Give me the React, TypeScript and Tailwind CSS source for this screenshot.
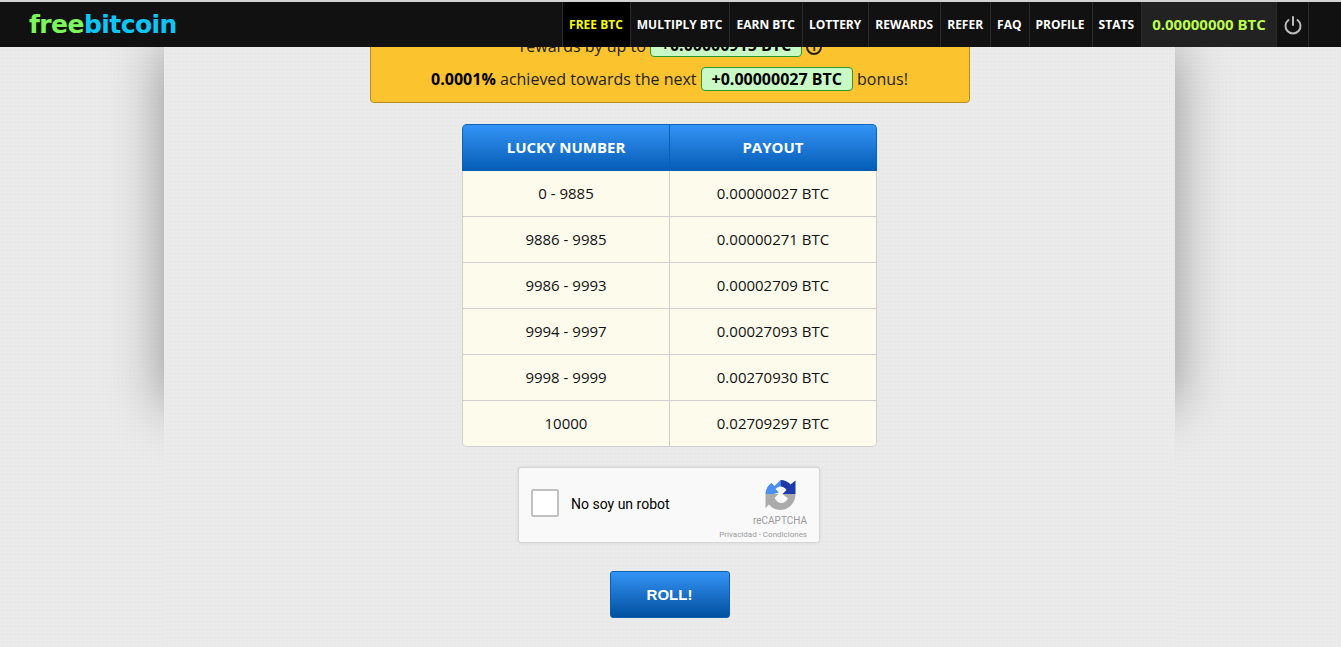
const navItems = ["FREE BTC", "MULTIPLY BTC", "EARN BTC", "LOTTERY", "REWARDS", "REFER", "FAQ", "PROFILE", "STATS"];

const payouts = [
  { range: "0 - 9885", payout: "0.00000027 BTC" },
  { range: "9886 - 9985", payout: "0.00000271 BTC" },
  { range: "9986 - 9993", payout: "0.00002709 BTC" },
  { range: "9994 - 9997", payout: "0.00027093 BTC" },
  { range: "9998 - 9999", payout: "0.00270930 BTC" },
  { range: "10000", payout: "0.02709297 BTC" },
];

function RecaptchaLogo() {
  return (
    <svg width="31" height="32" viewBox="0 0 30 32">
      <path d="M0 15 C0 11 2 6.500 6 4 L9 7 L15 1 L15 7.500 C13 7.500 11 8.500 10 10 L13.500 13.500 L8 15 Z" fill="#4a90f2" />
      <path d="M15 1 C19 1 22.500 2.500 25 5.500 L30 1.500 L30 15 L17 15 L21 11 C19.500 9 17.500 7.500 15 7.500 Z" fill="#1c3aa9" />
      <path d="M0 15 L13 15 L9 19 C10.500 21.500 12.500 24 15.500 24 C19 24 21 22 22.500 19.500 L17 15 L30 15 C30 23.500 23.500 31 15 31 C10 31 6 29 3.500 25.500 L0 29 Z" fill="#ababab" />
    </svg>
  );
}

export default function App() {
  return (
    <div className="h-screen overflow-hidden bg-[#e9e9e9] bg-[linear-gradient(#ebebeb_1px,transparent_1px),linear-gradient(90deg,#ebebeb_1px,transparent_1px)] bg-[size:4px_4px] font-['Open_Sans',sans-serif] text-[#111]">
      {/* Navbar */}
      <nav className="relative z-20 h-[47px] bg-[#111] border-t-2 border-[#d4d4d4] flex items-stretch justify-between">
        <div className="pl-[29px] flex items-center">
          <span className="font-['DejaVu_Sans',sans-serif] font-bold text-[25px] tracking-[-0.55px] leading-none text-[#7df55d]">
            free<span className="text-[#0cc6f7]">bitcoin</span>
          </span>
        </div>
        <div className="flex items-stretch">
          {navItems.map((item, i) => (
            <a
              key={item}
              className={`pl-[6px] pr-[7px] flex items-center border-l border-[#2a2a2a] text-[12px] font-bold ${i === 0 ? "bg-black text-[#f6ff00]" : "text-white"}`}
            >
              {item}
            </a>
          ))}
          <div className="w-[135px] flex items-center justify-center bg-[#222] border-l border-[#2a2a2a] text-[15px] font-bold text-[#bcfc4a]">
            0.00000000 BTC
          </div>
          <div className="w-[33px] flex items-center justify-center border-x border-[#2a2a2a]">
            <svg width="20" height="20" viewBox="0 0 20 20" fill="none" stroke="#bbb" strokeWidth="2" strokeLinecap="round">
              <path d="M10 2 V10" />
              <path d="M5.500 5 A7.500 7.500 0 1 0 14.500 5" />
            </svg>
          </div>
          <div className="w-[32px]" />
        </div>
      </nav>

      {/* Main column */}
      <div className="relative w-[1011px] ml-[164px]">
        <div className="absolute inset-x-0 top-0 h-[360px] shadow-[0_0_50px_rgba(0,0,0,0.38)]" />
        <div className="absolute inset-x-0 top-0 h-[600px] bg-[#e9e9e9] bg-[linear-gradient(#ebebeb_1px,transparent_1px),linear-gradient(90deg,#ebebeb_1px,transparent_1px)] bg-[size:4px_4px]" />

        <div className="relative flex flex-col items-center">
          {/* Bonus box */}
          <div className="w-[600px] h-[90px] -mt-[34px] bg-[#fbc32d] border border-[#b58e1e] rounded-[4px] text-center text-[16px] leading-[22px] text-[#222] overflow-hidden">
            <div className="flex items-center justify-center gap-[4px] h-[22px] mt-[20px] pl-[3px]">
              <span className="mt-[2px]">rewards by up to</span>
              <span className="inline-block px-[10px] h-[23px] leading-[21px] bg-[#c9fac6] border border-[#2b9a2b] rounded-[4px] font-bold text-black">
                +0.00000915 BTC
              </span>
              <span className="inline-block w-[16px] h-[16px] mt-[4px] rounded-full border-2 border-[#222] text-[11px] leading-[12px] font-bold">i</span>
            </div>
            <div className="flex items-center justify-center gap-[4px] h-[24px] mt-[11px]">
              <span><b className="text-black">0.0001%</b> achieved towards the next</span>
              <span className="inline-block px-[10px] h-[24px] leading-[22px] bg-[#c9fac6] border border-[#2b9a2b] rounded-[4px] font-bold text-black">
                +0.00000027 BTC
              </span>
              bonus!
            </div>
          </div>

          {/* Payout table */}
          <div className="w-[415px] mt-[21px] text-center text-[15px]">
            <div className="grid grid-cols-[207px_1fr] h-[47px] bg-gradient-to-b from-[#3394f6] to-[#005cb5] border border-[#0a63bb] border-b-0 rounded-t-[5px] items-stretch text-white font-bold">
              <div className="flex items-center justify-center pb-px border-r border-[#0a5fb4]">LUCKY NUMBER</div>
              <div className="flex items-center justify-center pb-px">PAYOUT</div>
            </div>
            <div className="border border-t-0 border-[#cfcfcf] rounded-b-[5px] overflow-hidden">
              {payouts.map((row, i) => (
                <div
                  key={row.range}
                  className={`grid grid-cols-[207px_1fr] bg-[#fdfbec] ${i > 0 ? "h-[46px] border-t border-[#cfcfcf]" : "h-[45px]"}`}
                >
                  <div className="flex items-center justify-center border-r border-[#cfcfcf]">{row.range}</div>
                  <div className="flex items-center justify-center">{row.payout}</div>
                </div>
              ))}
            </div>
          </div>

          {/* reCAPTCHA */}
          <div className="w-[302px] h-[76px] mt-[20px] -ml-px bg-[#f9f9f9] border border-[#d6d6d6] rounded-[3px] shadow-[0_0_3px_rgba(0,0,0,0.1)] flex font-['Roboto',sans-serif]">
            <div className="w-[28px] h-[28px] ml-[12px] mt-[21px] bg-white border-2 border-[#c1c1c1] rounded-[2px]" />
            <div className="ml-[12px] mt-[28px] text-[14px] leading-[17px] text-black">No soy un robot</div>
            <div className="ml-auto mr-[12px] flex flex-col items-end">
              <div className="mr-[11px] mt-[11px]">
                <RecaptchaLogo />
              </div>
              <div className="mt-[4px] text-[10px] leading-[12px] text-[#9b9b9b]">reCAPTCHA</div>
              <div className="mt-[3px] text-[8px] leading-[10px] text-[#9b9b9b]">Privacidad - Condiciones</div>
            </div>
          </div>

          <button className="w-[120px] h-[47px] mt-[28px] pt-px bg-gradient-to-b from-[#3394f6] to-[#00509f] border border-[#0a5fb4] rounded-[3px] text-white font-['Liberation_Sans',sans-serif] font-bold text-[15px]">
            ROLL!
          </button>
        </div>
      </div>
    </div>
  );
}
